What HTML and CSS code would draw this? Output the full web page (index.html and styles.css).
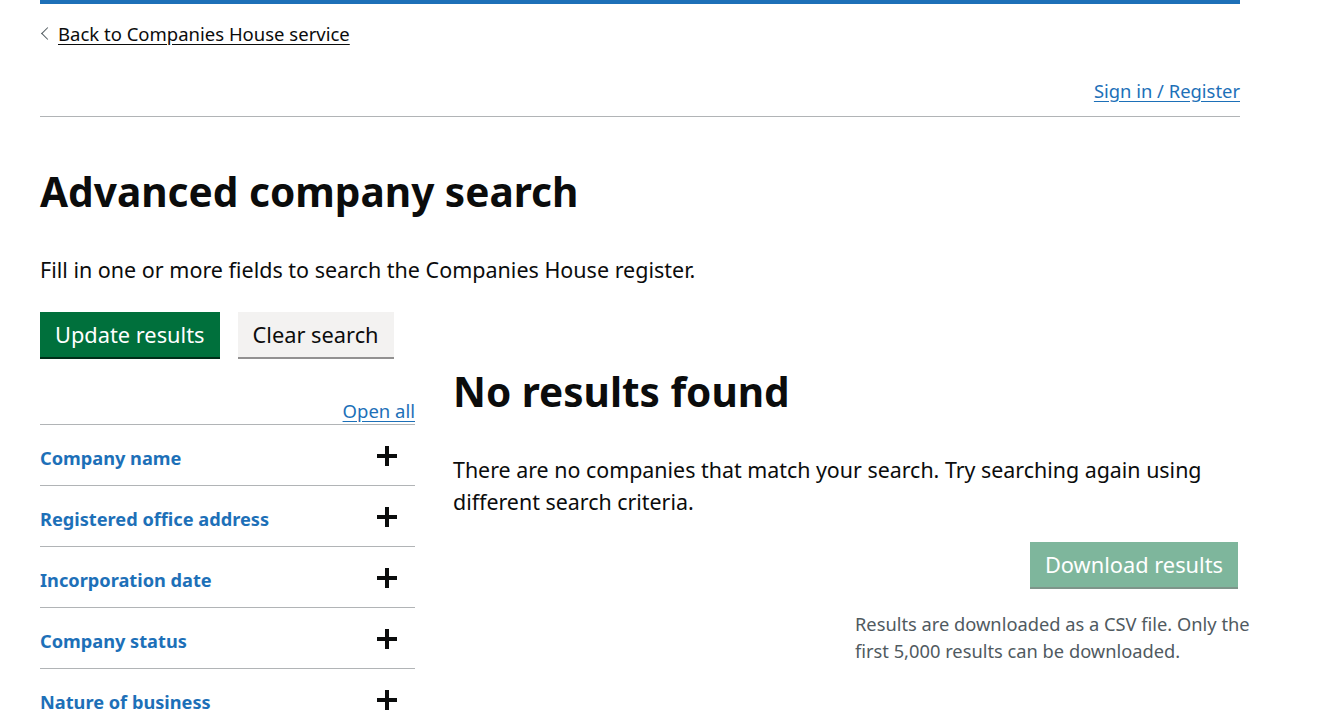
FILE: index.html
```html
<!DOCTYPE html>
<html lang="en">
<head>
    <meta charset="UTF-8">
    <meta name="viewport" content="width=device-width, initial-scale=1.0">
    <title>Advanced company search</title>
    <link rel="stylesheet" href="styles.css">
</head>
<body>
    <div class="page">
        <div class="top-bar"></div>

        <a href="#" class="back-link">Back to Companies House service</a>

        <div class="account-nav">
            <a href="#">Sign in / Register</a>
        </div>

        <main class="main">
            <h1>Advanced company search</h1>
            <p class="intro">Fill in one or more fields to search the Companies House register.</p>

            <div class="actions">
                <button class="button button-primary">Update results</button>
                <button class="button button-secondary">Clear search</button>
            </div>

            <div class="results-layout">
                <div class="filters">
                    <div class="open-all"><a href="#">Open all</a></div>
                    <div class="accordion-section">
                        <span class="section-title">Company name</span>
                        <svg class="plus" width="20" height="20" viewBox="0 0 20 20"><rect x="8" y="0" width="4" height="20"/><rect x="0" y="8" width="20" height="4"/></svg>
                    </div>
                    <div class="accordion-section">
                        <span class="section-title">Registered office address</span>
                        <svg class="plus" width="20" height="20" viewBox="0 0 20 20"><rect x="8" y="0" width="4" height="20"/><rect x="0" y="8" width="20" height="4"/></svg>
                    </div>
                    <div class="accordion-section">
                        <span class="section-title">Incorporation date</span>
                        <svg class="plus" width="20" height="20" viewBox="0 0 20 20"><rect x="8" y="0" width="4" height="20"/><rect x="0" y="8" width="20" height="4"/></svg>
                    </div>
                    <div class="accordion-section">
                        <span class="section-title">Company status</span>
                        <svg class="plus" width="20" height="20" viewBox="0 0 20 20"><rect x="8" y="0" width="4" height="20"/><rect x="0" y="8" width="20" height="4"/></svg>
                    </div>
                    <div class="accordion-section">
                        <span class="section-title">Nature of business</span>
                        <svg class="plus" width="20" height="20" viewBox="0 0 20 20"><rect x="8" y="0" width="4" height="20"/><rect x="0" y="8" width="20" height="4"/></svg>
                    </div>
                </div>

                <div class="results">
                    <h2>No results found</h2>
                    <p class="no-results">There are no companies that match your search. Try searching again using different search criteria.</p>
                    <div class="download">
                        <button class="button button-primary button-disabled" disabled>Download results</button>
                    </div>
                    <p class="download-hint">Results are downloaded as a CSV file. Only the first 5,000 results can be downloaded.</p>
                </div>
            </div>
        </main>
    </div>
</body>
</html>
```

FILE: styles.css
```css
body {
    margin: 0;
    font-family: 'Noto Sans', 'Liberation Sans', sans-serif;
    color: #0b0c0c;
    background: #fff;
}

.page {
    width: 1200px;
    margin-left: 40px;
}

.top-bar {
    height: 4px;
    background-color: #1d70b8;
}

.back-link {
    display: inline-block;
    position: relative;
    margin-top: 20px;
    padding-left: 18px;
    font-size: 18.5px;
    line-height: 20px;
    color: #0b0c0c;
    text-decoration: underline;
    text-underline-offset: 3px;
}

.back-link::before {
    content: "";
    position: absolute;
    left: 3px;
    top: 5px;
    width: 8px;
    height: 8px;
    border-left: 1px solid #505a5f;
    border-bottom: 1px solid #505a5f;
    transform: rotate(45deg);
}

.account-nav {
    display: flex;
    justify-content: flex-end;
    padding: 34px 0 14px;
    border-bottom: 1px solid #b1b4b6;
}

.account-nav a,
.open-all a {
    color: #1d70b8;
    text-decoration: underline;
    text-underline-offset: 3px;
}

.account-nav a {
    font-size: 18.4px;
    line-height: 22px;
}

h1 {
    margin: 50px 0 0;
    font-size: 40.6px;
    line-height: 50px;
    font-weight: 700;
}

.intro {
    margin: 39px 0 0;
    font-size: 21.5px;
    line-height: 28px;
}

.actions {
    display: flex;
    gap: 18px;
    margin-top: 28px;
}

.button {
    font-family: inherit;
    font-size: 21.8px;
    line-height: 27px;
    padding: 9px 15px;
    border: 0;
    border-radius: 0;
    cursor: pointer;
}

.button-primary {
    background-color: #00703c;
    color: #fff;
    box-shadow: 0 2px 0 #002d18;
}

.button-secondary {
    background-color: #f3f2f1;
    color: #0b0c0c;
    box-shadow: 0 2px 0 #929191;
}

.button-disabled {
    opacity: 0.5;
    cursor: default;
}

.results-layout {
    display: grid;
    grid-template-columns: 375px minmax(0, 1fr);
    column-gap: 38px;
    margin-top: 8px;
}

.filters {
    padding-top: 36px;
}

.open-all {
    display: flex;
    justify-content: flex-end;
    font-size: 18.5px;
    line-height: 20px;
    padding-bottom: 3px;
    border-bottom: 1px solid #b1b4b6;
}

.accordion-section {
    display: flex;
    justify-content: space-between;
    align-items: flex-start;
    box-sizing: border-box;
    height: 61px;
    padding: 21px 18px 0 0;
    border-bottom: 1px solid #b1b4b6;
}

.section-title {
    color: #1d70b8;
    font-size: 18.2px;
    line-height: 24px;
    font-weight: 700;
}

.plus {
    fill: #0b0c0c;
}

h2 {
    margin: 0;
    padding-top: 3px;
    font-size: 40.5px;
    line-height: 48px;
    font-weight: 700;
}

.no-results {
    margin: 38px 0 0;
    font-size: 21.4px;
    line-height: 32px;
}

.download {
    display: flex;
    justify-content: flex-end;
    margin-top: 24px;
    padding-right: 2px;
}

.download-hint {
    margin: 23px 0 0 402px;
    width: 400px;
    font-size: 18.3px;
    line-height: 27px;
    color: #505a5f;
}
```
